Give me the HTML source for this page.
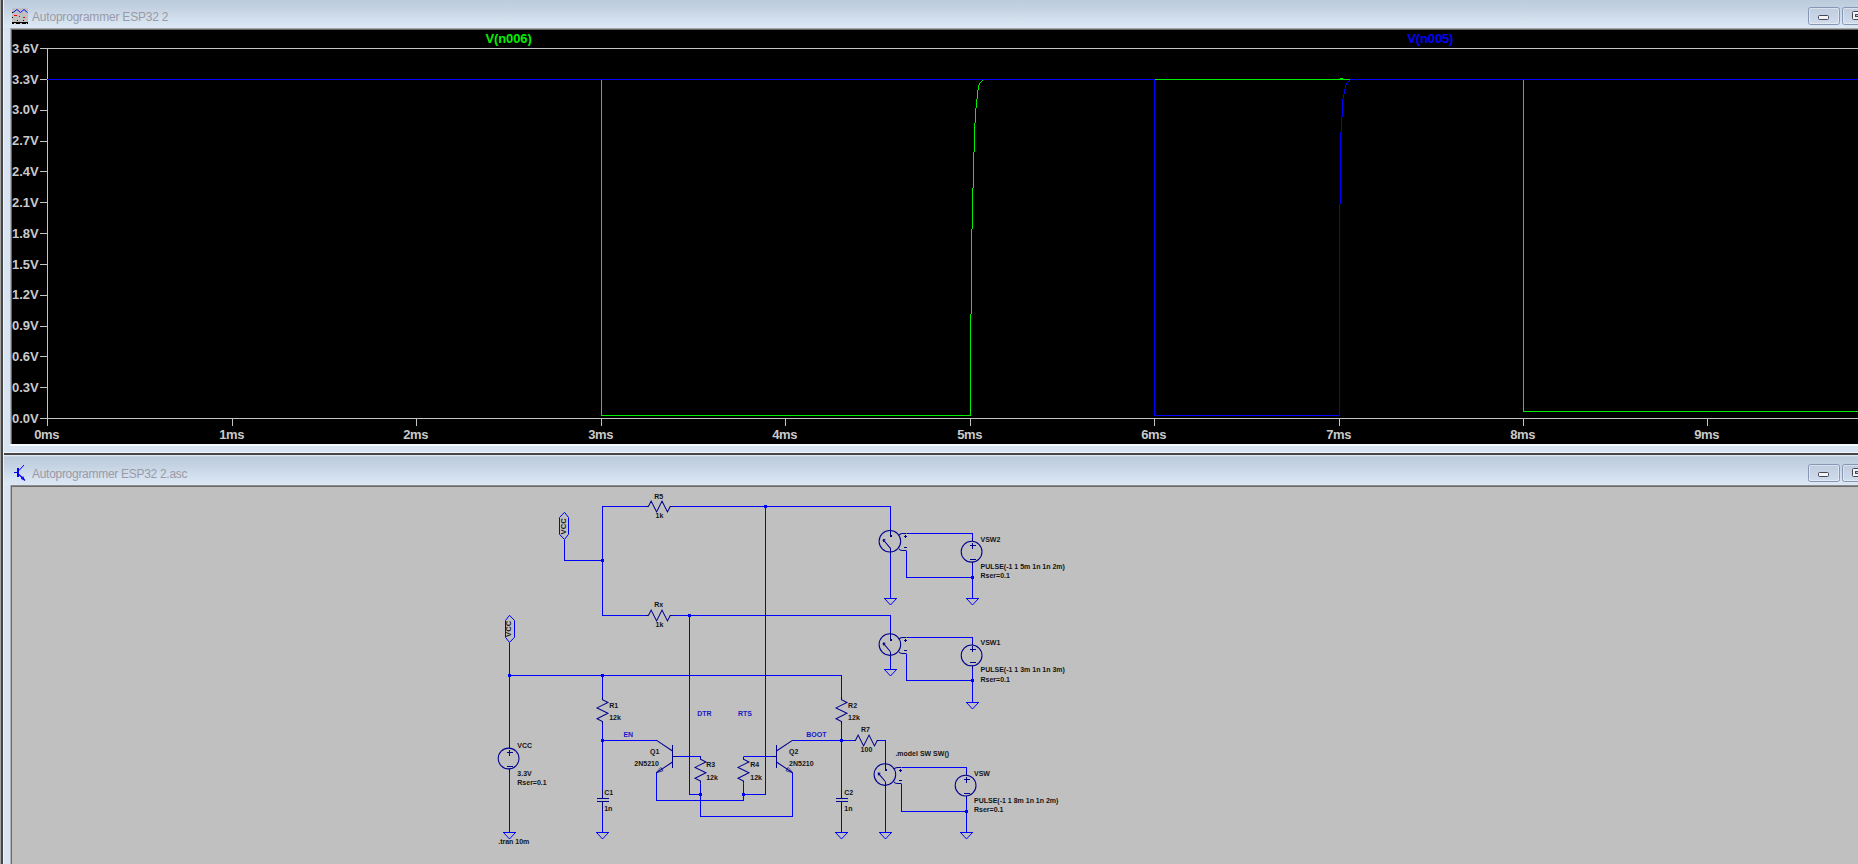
<!DOCTYPE html>
<html lang="en"><head><meta charset="utf-8"><title>Autoprogrammer ESP32 2</title>
<style>
html,body{margin:0;padding:0}
body{width:1858px;height:864px;overflow:hidden;position:relative;background:#d8e4f1;font-family:"Liberation Sans",sans-serif}
.abs{position:absolute}
.title{position:absolute;left:0;width:1858px;height:28px;background:linear-gradient(#bccbdc 0%,#c5d3e3 35%,#d3e0ee 70%,#dce8f5 100%)}
.ttext{position:absolute;left:32px;font-size:12px;color:#9a9aa6;white-space:nowrap;letter-spacing:-0.1px}
.btn{position:absolute;width:30px;height:16px;border:1px solid #8796b4;border-radius:2.5px;background:linear-gradient(#bfccdf,#d0dcec);box-shadow:inset 0 0 0 1px rgba(255,255,255,.4)}
.glyph{position:absolute;background:#f4f4f4;border:1px solid #44475a;border-radius:1.5px}
.glyph i{position:absolute;left:2px;top:2px;width:8px;height:1px;border:1px solid #44475a;background:#b8c6dc}
svg{position:absolute;left:0;top:0}
svg text{font-family:"Liberation Sans",sans-serif;font-weight:bold}
</style></head><body>
<div class="title" style="top:0"></div>
<div class="ttext" style="top:10px;letter-spacing:-0.2px">Autoprogrammer ESP32 2</div>
<div class="btn" style="left:1808px;top:7px"><div class="glyph" style="left:9px;top:7px;width:9px;height:3px"></div></div>
<div class="btn" style="left:1842px;top:7px"><div class="glyph" style="left:9px;top:3px;width:12px;height:7px"><i></i></div></div>
<div class="abs" style="left:10px;top:28px;width:1848px;height:418px;background:#f6f9fc"></div>
<div class="abs" style="left:10px;top:28px;width:1px;height:416px;background:#aeb2b8"></div>
<div class="abs" style="left:11px;top:28px;width:1847px;height:16px;background:linear-gradient(#a0a0a0,#505050 60%,#000)"></div>
<div class="abs" style="left:11px;top:29px;width:1847px;height:415px;background:#646464"></div>
<div class="abs" style="left:12px;top:30px;width:1846px;height:414px;background:#000"></div>
<div class="abs" style="left:11px;top:28px;width:1847px;height:1px;background:#a8a8a8"></div>
<div class="abs" style="left:0;top:452px;width:1858px;height:1px;background:#f2f6fb"></div>
<div class="abs" style="left:0;top:453px;width:1858px;height:2px;background:#464646"></div>
<div class="title" style="top:455px;height:31px;background:linear-gradient(#e8f0f8 0,#bccbdc 2px,#c6d4e4 40%,#d6e2f0 75%,#dce8f5 100%)"></div>
<div class="ttext" style="top:467px;letter-spacing:-0.29px">Autoprogrammer ESP32 2.asc</div>
<div class="btn" style="left:1808px;top:464px"><div class="glyph" style="left:9px;top:7px;width:9px;height:3px"></div></div>
<div class="btn" style="left:1842px;top:464px"><div class="glyph" style="left:9px;top:3px;width:12px;height:7px"><i></i></div></div>
<div class="abs" style="left:10px;top:485px;width:1848px;height:379px;background:#f0f3f8"></div>
<div class="abs" style="left:10px;top:485px;width:1px;height:379px;background:#b4b8be"></div>
<div class="abs" style="left:11px;top:485px;width:1847px;height:379px;background:#6a6a6a"></div>
<div class="abs" style="left:11px;top:485px;width:1847px;height:1px;background:#8c8c8c"></div>
<div class="abs" style="left:12px;top:487px;width:1846px;height:377px;background:#c0c0c0"></div>
<div class="abs" style="left:0;top:0;width:1px;height:864px;background:#a4a4a4"></div>
<div class="abs" style="left:1px;top:0;width:2px;height:864px;background:#454545"></div>
<div class="abs" style="left:3px;top:0;width:1px;height:864px;background:#eef3f9"></div>
<svg width="1858" height="864" viewBox="0 0 1858 864">
<g shape-rendering="crispEdges"><rect x="12" y="8" width="16" height="16" fill="#c0c0c0"/><rect x="12" y="22" width="16" height="1" fill="#000"/><path d="M12 23.5 H14 M16 23.5 H20 M22 23.5 H26 M27 23.5 H28" stroke="#000" stroke-width="1"/><rect x="12" y="12" width="1" height="1" fill="#000"/><rect x="12" y="17" width="1" height="1" fill="#000"/><rect x="14" y="15" width="3" height="1" fill="#f00"/><rect x="19" y="16" width="1" height="1" fill="#f00"/><rect x="23" y="17" width="2" height="1" fill="#f00"/><rect x="17" y="20" width="1" height="1" fill="#000080"/><rect x="23" y="20" width="1" height="1" fill="#000080"/></g>
<path d="M13 12.5 L17 9.5 L20.5 12.5 L24 9.5 L27.5 12.5" stroke="#0000ff" stroke-width="0.95" fill="none"/>
<g stroke="#0000ff" fill="none"><path d="M18 468 V477" stroke-width="2" shape-rendering="crispEdges"/><path d="M14 472.5 H18" stroke-width="1"/><path d="M19 470.5 L24 465" stroke-width="1"/><path d="M19 474.5 L25 480.5" stroke-width="1.2"/><path d="M24 479.8 L21 478.6 L23.2 476.6 Z" fill="#0000ff" stroke-width=".6"/></g>
<g stroke="#c4c4c4" stroke-width="1" fill="none" shape-rendering="crispEdges">
<path d="M40 48.5 H1858 M40 418.5 H1858 M47.75 48.5 V425.5"/>
<path d="M40 387.5 H47 M40 356.5 H47 M40 326.5 H47 M40 295.5 H47 M40 264.5 H47 M40 233.5 H47 M40 202.5 H47 M40 171.5 H47 M40 141.5 H47 M40 110.5 H47 M40 79.5 H47 M232.5 418.5 V425.5 M416.5 418.5 V425.5 M601.5 418.5 V425.5 M785.5 418.5 V425.5 M970.5 418.5 V425.5 M1154.5 418.5 V425.5 M1339.5 418.5 V425.5 M1523.5 418.5 V425.5 M1707.5 418.5 V425.5 "/>
</g>
<path d="M47 79.5 H601.5 V415.5 H970 M970.5 314 V416 M971.5 229 V314 M972.5 188 V229 M973.5 152 V188 M974.5 123 V152 M975.5 108 V123 M976.5 99 V108 M977.5 90 V99 M978.5 85 V90 M979.5 83 V85 M980.5 82 V83 M981.5 81 V82 M982.5 80 V81 M983 79.5 H1523.5 V411.5 H1858" stroke="#00ee00" stroke-width="1" fill="none" shape-rendering="crispEdges"/>
<path d="M1340 78.5 H1343" stroke="#00ee00" stroke-width="1" fill="none" shape-rendering="crispEdges"/>
<path d="M47 79.5 H1154.5 V415.5 H1339 M1339.5 204 V416 M1340.5 132 V204 M1341.5 117 V132 M1342.5 99 V117 M1343.5 94 V99 M1344.5 89 V94 M1345.5 85 V89 M1346.5 83 V85 M1347.5 82 V83 M1348.5 81 V82 M1349.5 80 V81 M1350 79.5 H1858" stroke="#0000ff" stroke-width="1" fill="none" shape-rendering="crispEdges"/>
<g font-size="13" fill="#cacaca">
<text x="12" y="52.7">3.6V</text>
<text x="12" y="83.53">3.3V</text>
<text x="12" y="114.37">3.0V</text>
<text x="12" y="145.2">2.7V</text>
<text x="12" y="176.03">2.4V</text>
<text x="12" y="206.87">2.1V</text>
<text x="12" y="237.7">1.8V</text>
<text x="12" y="268.53">1.5V</text>
<text x="12" y="299.37">1.2V</text>
<text x="12" y="330.2">0.9V</text>
<text x="12" y="361.03">0.6V</text>
<text x="12" y="391.87">0.3V</text>
<text x="12" y="422.7">0.0V</text>
<text x="46.7" y="439.2" text-anchor="middle" letter-spacing="-0.35">0ms</text>
<text x="231.7" y="439.2" text-anchor="middle" letter-spacing="-0.35">1ms</text>
<text x="415.7" y="439.2" text-anchor="middle" letter-spacing="-0.35">2ms</text>
<text x="600.7" y="439.2" text-anchor="middle" letter-spacing="-0.35">3ms</text>
<text x="784.7" y="439.2" text-anchor="middle" letter-spacing="-0.35">4ms</text>
<text x="969.7" y="439.2" text-anchor="middle" letter-spacing="-0.35">5ms</text>
<text x="1153.7" y="439.2" text-anchor="middle" letter-spacing="-0.35">6ms</text>
<text x="1338.7" y="439.2" text-anchor="middle" letter-spacing="-0.35">7ms</text>
<text x="1522.7" y="439.2" text-anchor="middle" letter-spacing="-0.35">8ms</text>
<text x="1706.7" y="439.2" text-anchor="middle" letter-spacing="-0.35">9ms</text>
</g>
<text x="485.5" y="43.3" font-size="13" letter-spacing="-0.12" fill="#00f000">V(n006)</text>
<text x="1407.2" y="43.3" font-size="13" letter-spacing="-0.12" fill="#0000ff">V(n005)</text>
<g stroke="#0000ff" stroke-width="1" fill="none" shape-rendering="crispEdges"><path d="M602.5 615.5 L602.5 506.5 L645.68 506.5 M672.92 506.5 L890.5 506.5 L890.5 527.6 M564.5 539.5 L564.5 560.5 L602.5 560.5 M602.5 615.5 L645.68 615.5 M672.92 615.5 L890.5 615.5 L890.5 631 M890.5 554.84 L890.5 598.5 M884 598.5 H897 M906.5 533.5 L972.5 533.5 L972.5 538 M972.5 565.3 L972.5 598.5 M966 598.5 H979 M906.5 550.5 L906.5 577.5 L972.5 577.5 M890.5 658.24 L890.5 669.5 M884 669.5 H897 M906.5 637.5 L972.5 637.5 L972.5 641.8 M972.5 669 L972.5 702.5 M966 702.5 H979 M906.5 653.5 L906.5 680.5 L972.5 680.5 M509.5 642.5 L509.5 744.9 M509.5 675.5 L841.5 675.5 L841.5 697 M602.5 675.5 L602.5 697 M602.5 724.2 L602.5 789.5 M841.5 724.2 L841.5 789.5 M509.5 772.1 L509.5 832.5 M503 832.5 H516 M602.5 740.5 L656.5 740.5 M678 756.5 L700.5 756.5 M700.5 783.74 L700.5 816.5 L792.5 816.5 L792.5 772.9 M689.5 615.5 L689.5 794.5 L700.5 794.5 M656.5 772.9 L656.5 800.5 L743.5 800.5 L743.5 794.5 M743.5 756.5 L771 756.5 M743.5 783.74 L743.5 794.5 M765.5 506.5 L765.5 794.5 L743.5 794.5 M792.5 740.5 L852.7 740.5 M879.92 740.5 L885.5 740.5 L885.5 761 M602.5 810.5 L602.5 832.5 M841.5 810.5 L841.5 832.5 M596 832.5 H609 M835 832.5 H848 M885.5 788.24 L885.5 832.5 M879 832.5 H892 M901.5 767.5 L966.5 767.5 L966.5 772 M966.5 799.2 L966.5 832.5 M960 832.5 H973 M901.5 783.5 L901.5 811.5 L966.5 811.5"/></g>
<g stroke="#0000ff" stroke-width="1" fill="none"><path d="M564.5 512.3 L568.5 517.5 V534.3 L564.5 539.5 L559.5 534.3 V517.5 Z M884.5 598.5 L890.5 605 L896.5 598.5 M966.5 598.5 L972.5 605 L978.5 598.5 M884.5 669.5 L890.5 676 L896.5 669.5 M966.5 702.5 L972.5 709 L978.5 702.5 M509.5 615.3 L514.5 620.5 V637.3 L509.5 642.5 L505.5 637.3 V620.5 Z M503.5 832.5 L509.5 839 L515.5 832.5 M596.5 832.5 L602.5 839 L608.5 832.5 M835.5 832.5 L841.5 839 L847.5 832.5 M879.5 832.5 L885.5 839 L891.5 832.5 M960.5 832.5 L966.5 839 L972.5 832.5"/></g>
<g stroke="#000090" stroke-width="1" fill="none" shape-rendering="crispEdges"><path d="M890.5 527.58 L890.5 536.09 M890.5 548.35 L890.5 554.82 M904 536.5 L907 536.5 M905.5 535 L905.5 538 M904 547.5 L907 547.5 M969.5 545.7 L975.5 545.7 M972.5 542.7 L972.5 548.7 M969.5 559.2 L975.5 559.2 M972.5 538.1 L972.5 541.1 M972.5 562.3 L972.5 565.3 M890.5 630.98 L890.5 639.49 M890.5 651.75 L890.5 658.22 M904 640.5 L907 640.5 M905.5 639 L905.5 642 M904 650.5 L907 650.5 M969.5 649.4 L975.5 649.4 M972.5 646.4 L972.5 652.4 M969.5 662.9 L975.5 662.9 M972.5 641.8 L972.5 644.8 M972.5 666 L972.5 669 M506.5 752.5 L512.5 752.5 M509.5 749.5 L509.5 755.5 M506.5 766 L512.5 766 M509.5 744.9 L509.5 747.9 M509.5 769.1 L509.5 772.1 M678 756.5 L672.5 756.5 M672.5 744.9 L672.5 768.1 M771 756.5 L776.5 756.5 M776.5 744.9 L776.5 768.1 M596.5 798.5 L608.5 798.5 M596.5 801.5 L608.5 801.5 M602.5 789.5 L602.5 798.5 M602.5 801.5 L602.5 810.5 M835.5 798.5 L847.5 798.5 M835.5 801.5 L847.5 801.5 M841.5 789.5 L841.5 798.5 M841.5 801.5 L841.5 810.5 M885.5 760.98 L885.5 769.49 M885.5 781.75 L885.5 788.22 M899 770.5 L902 770.5 M900.5 769 L900.5 772 M899 780.5 L902 780.5 M963.5 779.6 L969.5 779.6 M966.5 776.6 L966.5 782.6 M963.5 793.1 L969.5 793.1 M966.5 772 L966.5 775 M966.5 796.2 L966.5 799.2"/></g>
<path d="M889.5 535.24 h2 v2 h-2z M889.5 638.64 h2 v2 h-2z M884.5 768.64 h2 v2 h-2z" fill="#000090" shape-rendering="crispEdges"/>
<g stroke="#000090" stroke-width="1.05" fill="none" stroke-linejoin="miter"><path d="M645.68 506.5 L648.4 506.5 L651.13 501.05 L656.58 511.95 L662.02 501.05 L667.47 511.95 L670.2 506.5 L672.92 506.5 M645.68 615.5 L648.4 615.5 L651.13 610.05 L656.58 620.95 L662.02 610.05 L667.47 620.95 L670.2 615.5 L672.92 615.5 M883.01 539.5 L890.5 548.35 M883.01 539.5 L885.39 539.84 M883.01 539.5 L883.69 541.88 M898.9 535.3 Q900.1 533.5 902.3 533.5 L906.5 533.5 M898.9 548.7 Q900.1 550.5 902.3 550.5 L906.5 550.5 M883.01 642.9 L890.5 651.75 M883.01 642.9 L885.39 643.24 M883.01 642.9 L883.69 645.28 M898.9 639.3 Q900.1 637.5 902.3 637.5 L906.5 637.5 M898.9 651.7 Q900.1 653.5 902.3 653.5 L906.5 653.5 M602.5 696.98 L602.5 699.7 L607.95 702.43 L597.05 707.88 L607.95 713.32 L597.05 718.77 L602.5 721.5 L602.5 724.22 M841.5 696.98 L841.5 699.7 L846.95 702.43 L836.05 707.88 L846.95 713.32 L836.05 718.77 L841.5 721.5 L841.5 724.22 M672.5 751.05 L656.21 740.16 M672.5 761.95 L656.21 772.84 M700.5 756.5 L700.5 759.22 L705.95 761.95 L695.05 767.4 L705.95 772.84 L695.05 778.29 L700.5 781.02 L700.5 783.74 M776.5 751.05 L792.79 740.16 M776.5 761.95 L792.79 772.84 M743.5 756.5 L743.5 759.22 L748.95 761.95 L738.05 767.4 L748.95 772.84 L738.05 778.29 L743.5 781.02 L743.5 783.74 M852.68 740.5 L855.4 740.5 L858.13 735.05 L863.58 745.95 L869.02 735.05 L874.47 745.95 L877.2 740.5 L879.92 740.5 M878.01 772.9 L885.5 781.75 M878.01 772.9 L880.39 773.24 M878.01 772.9 L878.69 775.28 M893.9 769.3 Q895.1 767.5 897.3 767.5 L901.5 767.5 M893.9 781.7 Q895.1 783.5 897.3 783.5 L901.5 783.5"/><path d="M656.21 772.84 L663.02 770.66 L660.77 767.46 Z M792.79 772.84 L785.98 770.66 L788.23 767.46 Z" stroke-width="0.7"/>
<circle cx="889.9" cy="541.2" r="10.8"/>
<circle cx="971.6" cy="551.7" r="10.4"/>
<circle cx="889.9" cy="644.6" r="10.8"/>
<circle cx="971.6" cy="655.4" r="10.4"/>
<circle cx="508.6" cy="758.5" r="10.4"/>
<circle cx="884.9" cy="774.6" r="10.8"/>
<circle cx="965.6" cy="785.6" r="10.4"/>
</g>
<g fill="#0000ff" shape-rendering="crispEdges">
<rect x="764" y="505" width="3" height="3"/>
<rect x="601" y="559" width="3" height="3"/>
<rect x="688" y="614" width="3" height="3"/>
<rect x="971" y="576" width="3" height="3"/>
<rect x="971" y="679" width="3" height="3"/>
<rect x="508" y="674" width="3" height="3"/>
<rect x="601" y="674" width="3" height="3"/>
<rect x="601" y="739" width="3" height="3"/>
<rect x="699" y="793" width="3" height="3"/>
<rect x="742" y="793" width="3" height="3"/>
<rect x="840" y="739" width="3" height="3"/>
<rect x="965" y="810" width="3" height="3"/>
</g>
<g>
<text x="654.2" y="498.9" fill="#141414" font-size="7">R5</text>
<text x="655.5" y="517.9" fill="#141414" font-size="7">1k</text>
<text x="654.2" y="606.8" fill="#141414" font-size="7">Rx</text>
<text x="655.5" y="626.8" fill="#141414" font-size="7">1k</text>
<text x="980.5" y="541.8" fill="#141414" font-size="7">VSW2</text>
<text x="980.5" y="568.9" fill="#141414" font-size="7">PULSE(-1 1 5m 1n 1n 2m)</text>
<text x="980.5" y="577.8" fill="#141414" font-size="7">Rser=0.1</text>
<text x="980.5" y="644.7" fill="#141414" font-size="7">VSW1</text>
<text x="980.5" y="671.9" fill="#141414" font-size="7">PULSE(-1 1 3m 1n 1n 3m)</text>
<text x="980.5" y="681.6" fill="#141414" font-size="7">Rser=0.1</text>
<text x="609.2" y="708.2" fill="#141414" font-size="7">R1</text>
<text x="609.2" y="720" fill="#141414" font-size="7">12k</text>
<text x="848.1" y="708.2" fill="#141414" font-size="7">R2</text>
<text x="848.1" y="720" fill="#141414" font-size="7">12k</text>
<text x="623.4" y="737" fill="#1818c8" font-size="7">EN</text>
<text x="697.2" y="716" fill="#1818c8" font-size="7">DTR</text>
<text x="738" y="716" fill="#1818c8" font-size="7">RTS</text>
<text x="806.3" y="737" fill="#1818c8" font-size="7">BOOT</text>
<text x="861" y="731.8" fill="#141414" font-size="7">R7</text>
<text x="860.6" y="751.7" fill="#141414" font-size="7">100</text>
<text x="895.4" y="756" fill="#141414" font-size="7">.model SW SW()</text>
<text x="517.3" y="747.9" fill="#141414" font-size="7">VCC</text>
<text x="517.3" y="776" fill="#141414" font-size="7">3.3V</text>
<text x="517.3" y="784.9" fill="#141414" font-size="7">Rser=0.1</text>
<text x="498.2" y="844" fill="#141414" font-size="7">.tran 10m</text>
<text x="650" y="753.7" fill="#141414" font-size="7">Q1</text>
<text x="634.3" y="765.8" fill="#141414" font-size="7">2N5210</text>
<text x="789.1" y="753.7" fill="#141414" font-size="7">Q2</text>
<text x="789.1" y="765.8" fill="#141414" font-size="7">2N5210</text>
<text x="706.2" y="766.7" fill="#141414" font-size="7">R3</text>
<text x="706.2" y="779.7" fill="#141414" font-size="7">12k</text>
<text x="750.3" y="766.7" fill="#141414" font-size="7">R4</text>
<text x="750.3" y="779.7" fill="#141414" font-size="7">12k</text>
<text x="604.2" y="794.9" fill="#141414" font-size="7">C1</text>
<text x="604.2" y="810.8" fill="#141414" font-size="7">1n</text>
<text x="844.3" y="794.9" fill="#141414" font-size="7">C2</text>
<text x="844.3" y="810.8" fill="#141414" font-size="7">1n</text>
<text x="974" y="775.6" fill="#141414" font-size="7">VSW</text>
<text x="974" y="802.7" fill="#141414" font-size="7">PULSE(-1 1 8m 1n 1n 2m)</text>
<text x="974" y="811.6" fill="#141414" font-size="7">Rser=0.1</text>
<text x="0" y="0" fill="#141414" font-size="7.7" transform="translate(566.3 534.4) rotate(-90)">VCC</text>
<text x="0" y="0" fill="#141414" font-size="7.7" transform="translate(510.7 637.0) rotate(-90)">VCC</text>
</g>
</svg>
</body></html>
